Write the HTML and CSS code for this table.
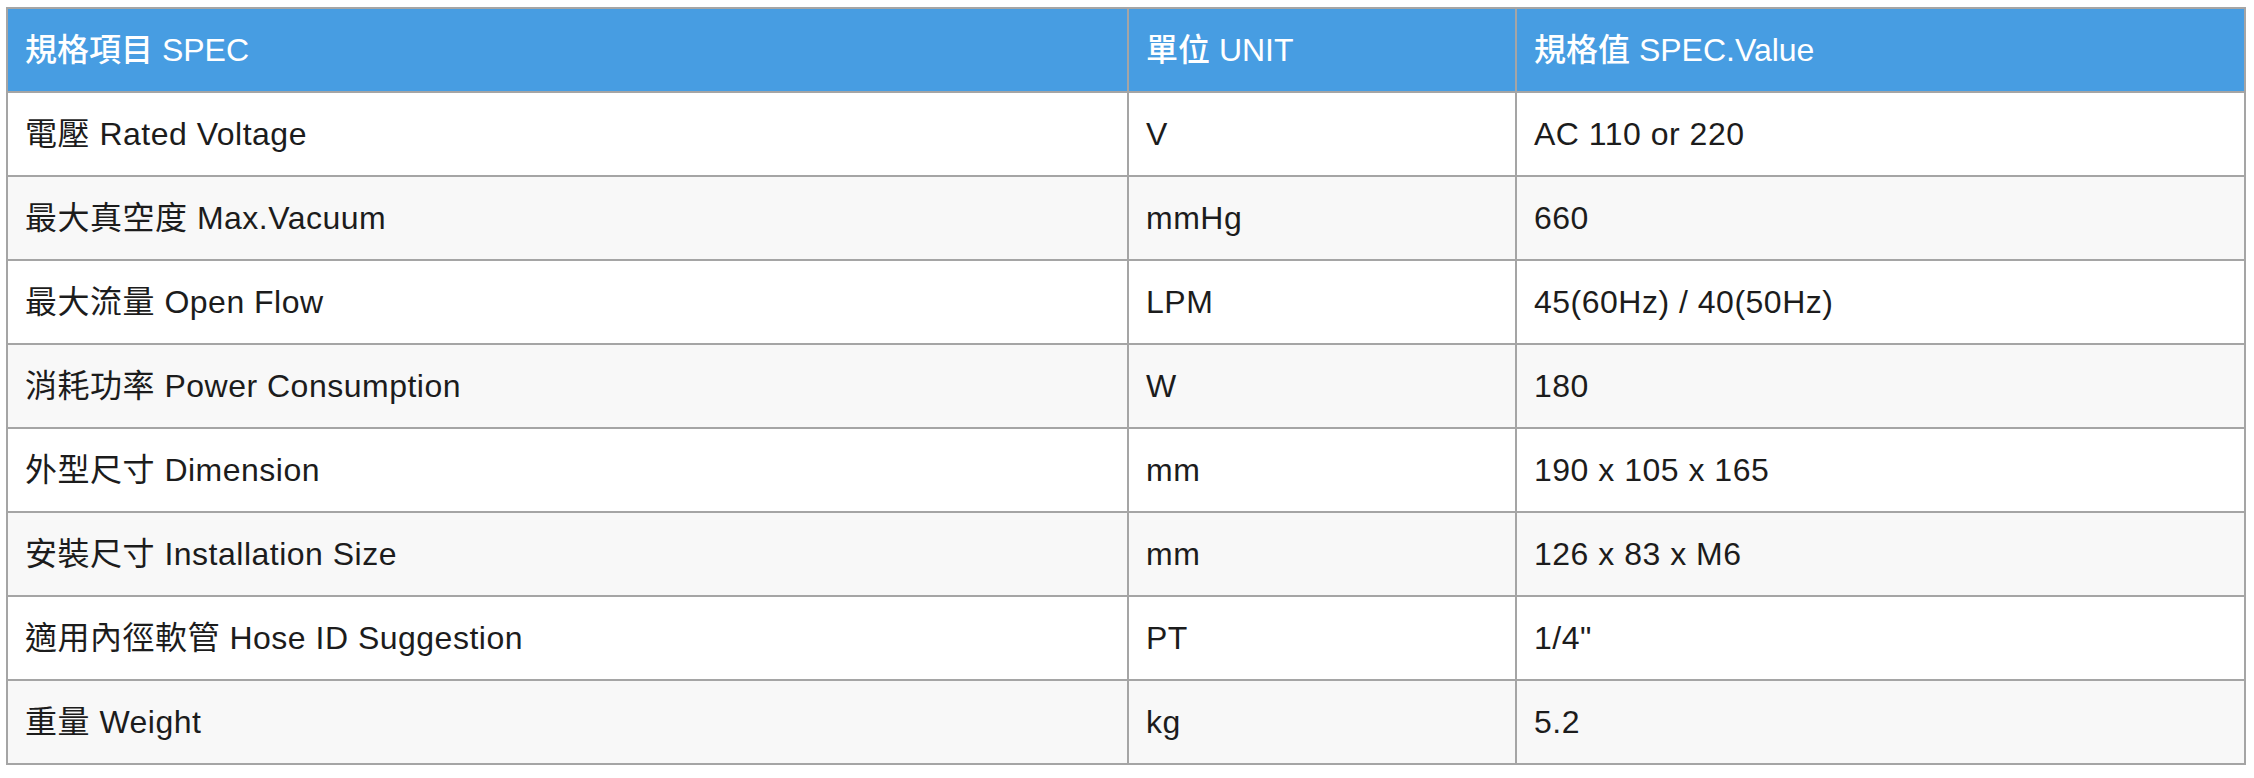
FILE: index.html
```html
<!DOCTYPE html>
<html lang="zh-Hant">
<head>
<meta charset="utf-8">
<title>規格表</title>
<link rel="stylesheet" href="styles.css">
</head>
<body>
<table class="spec-table">
  <colgroup>
    <col class="col-item">
    <col class="col-unit">
    <col class="col-value">
  </colgroup>
  <thead>
    <tr>
      <th>規格項目 SPEC</th>
      <th>單位 UNIT</th>
      <th>規格值 SPEC.Value</th>
    </tr>
  </thead>
  <tbody>
    <tr><td>電壓 Rated Voltage</td><td>V</td><td>AC 110 or 220</td></tr>
    <tr><td>最大真空度 Max.Vacuum</td><td>mmHg</td><td>660</td></tr>
    <tr><td>最大流量 Open Flow</td><td>LPM</td><td>45(60Hz) / 40(50Hz)</td></tr>
    <tr><td>消耗功率 Power Consumption</td><td>W</td><td>180</td></tr>
    <tr><td>外型尺寸 Dimension</td><td>mm</td><td>190 x 105 x 165</td></tr>
    <tr><td>安裝尺寸 Installation Size</td><td>mm</td><td>126 x 83 x M6</td></tr>
    <tr><td>適用內徑軟管 Hose ID Suggestion</td><td>PT</td><td>1/4"</td></tr>
    <tr><td>重量 Weight</td><td>kg</td><td>5.2</td></tr>
  </tbody>
</table>
</body>
</html>
```
FILE: styles.css
```css
html, body {
  background: #ffffff;
}
body {
  margin: 7px 0 0 6px;
  font-family: "Liberation Sans", "Noto Sans CJK TC", "Noto Sans CJK SC", sans-serif;
  font-size: 32px;
  color: #1c1c1c;
}
.spec-table {
  width: 2240px;
  table-layout: fixed;
  border-collapse: collapse;
  border: 2px solid #a5a5a5;
}
.col-item { width: 1121px; }
.col-unit { width: 388px; }
.col-value { width: 729px; }

.spec-table th,
.spec-table td {
  border: 2px solid #a5a5a5;
  height: 84px;
  padding: 0 17px;
  text-align: left;
  vertical-align: middle;
  line-height: 40px;
  box-sizing: border-box;
  white-space: nowrap;
}
.spec-table th {
  background: #479de2;
  color: #ffffff;
  font-weight: 500;
}
.spec-table td {
  letter-spacing: 0.5px;
}
.spec-table tbody tr:nth-child(odd) td {
  background: #ffffff;
}
.spec-table tbody tr:nth-child(even) td {
  background: #f8f8f8;
}
```
